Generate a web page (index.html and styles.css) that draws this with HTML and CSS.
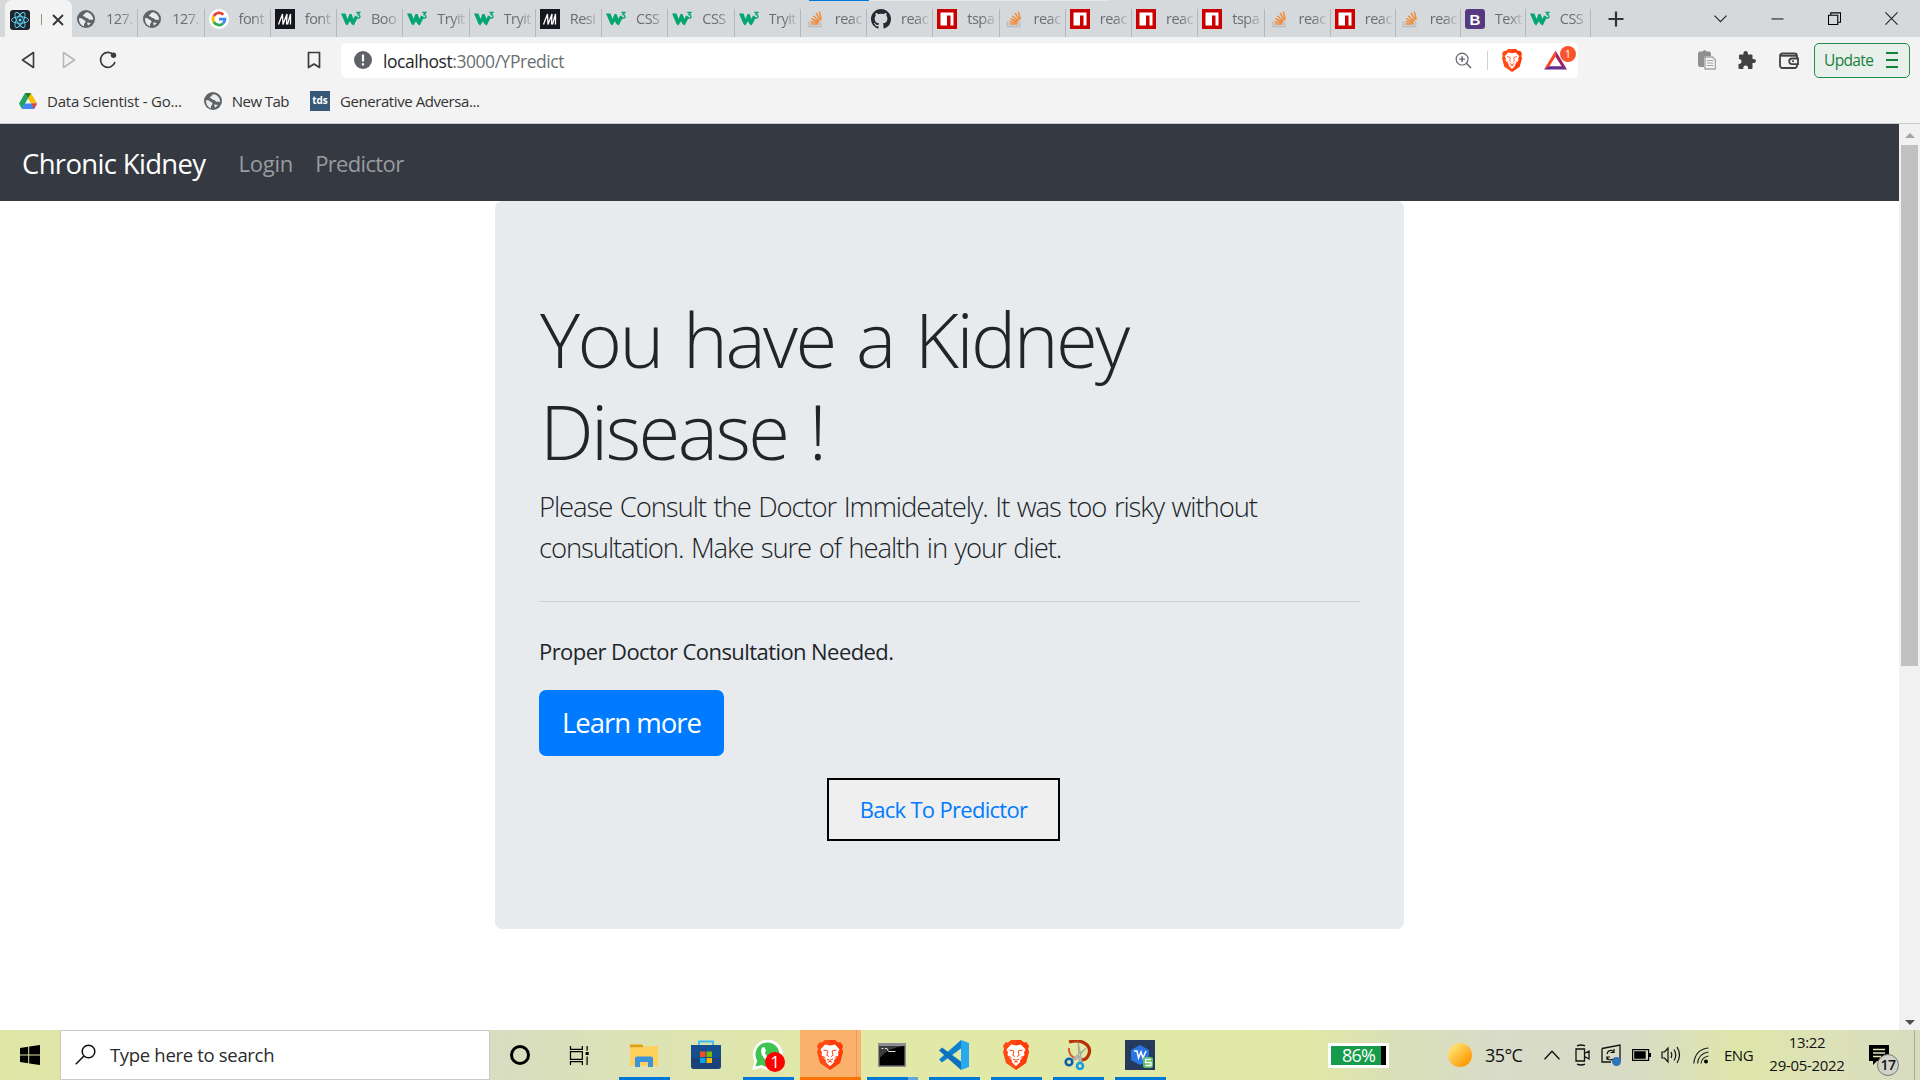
FILE: index.html
```html
<!DOCTYPE html>
<html lang="en">
<head>
<meta charset="utf-8">
<title>Chronic Kidney</title>
<link rel="stylesheet" href="styles.css">
</head>
<body>
<svg class="defs" width="0" height="0">
  <symbol id="globe" viewBox="0 0 20 20"><circle cx="10" cy="10" r="9" fill="#5f6368"/><path d="M3 9c2 .3 3 .2 4 1.300s2.500 1 2.500 2.400-1.500 1.300-1.500 3v1.500C5 16.500 2.800 13.500 3 9zM10.500 3.200c-1.800.600-1.600 2-3 2.600-1 .500-.4 1.500.6 1.700 1.500.2 1 1.500 2.700 1.500 1.500 0 1.600 1.500 3 1.800 1.200.2 2.200-.3 3.300.2.300-3.600-2.600-7.500-6.600-7.800zM11 13.500l4 .5-3 2.800z" fill="#e8eaec"/></symbol>
  <symbol id="google" viewBox="0 0 20 20"><circle cx="10" cy="10" r="10" fill="#fff"/><g fill="none" stroke-width="2.800"><path d="M14.300 5.700A6 6 0 0 0 4.800 7" stroke="#ea4335"/><path d="M4.800 7a6 6 0 0 0 0 6" stroke="#fbbc05"/><path d="M4.800 13a6 6 0 0 0 9.200 1.500" stroke="#34a853"/><path d="M14 14.500A6 6 0 0 0 16 10.100H10" stroke="#4285f4"/></g></symbol>
  <symbol id="mui" viewBox="0 0 20 20"><path d="M0 0h20v20H0z" fill="#16161e"/><path d="M3.500 15.500L7.500 5l.5 10.500L12 5l-.5 10.500M12.500 15.500L15.500 5v10.500" fill="none" stroke="#fff" stroke-width="1.300"/></symbol>
  <symbol id="w3" viewBox="0 0 20 20"><path d="M0 4.500h4.500l2 5.500 2-5h2l2 5 1.500-3.500 3 1.500-4.300 8.500L10.500 15l-1.500-2.800-2.800 4.300L4.500 15z" fill="#04a56f"/><path d="M15.300 3.500H18.700L17 5.600q2 .1 2 1.800t-2 1.700q-1.200 0-1.900-.8" fill="none" stroke="#04a56f" stroke-width="1.300"/></symbol>
  <symbol id="stack" viewBox="0 0 20 20"><path d="M3.500 12.500v5h12v-5" fill="none" stroke="#b9bdc0" stroke-width="1.500"/><path d="M5.500 15h8M5.500 12.600l8 1.200M6.400 9.700l7.400 3M8.200 6.800l6.300 5.200M11 4l4.500 7M14.300 2.600l2 7.800" stroke="#f48024" stroke-width="1.500" opacity=".85"/></symbol>
  <symbol id="github" viewBox="0 0 16 16"><path fill="#24292f" d="M8 0C3.580 0 0 3.580 0 8c0 3.540 2.290 6.530 5.470 7.590.4.070.55-.17.55-.38 0-.19-.01-.82-.01-1.490-2.010.37-2.530-.49-2.690-.94-.09-.23-.48-.94-.82-1.130-.28-.15-.68-.52-.01-.53.63-.01 1.080.58 1.230.82.72 1.210 1.870.87 2.330.66.07-.52.28-.87.51-1.070-1.780-.2-3.640-.89-3.640-3.950 0-.87.31-1.590.82-2.150-.08-.2-.36-1.020.08-2.120 0 0 .67-.21 2.200.82.64-.18 1.320-.27 2-.27s1.360.09 2 .27c1.530-1.040 2.200-.82 2.200-.82.44 1.100.16 1.920.08 2.120.51.56.82 1.270.82 2.150 0 3.070-1.870 3.750-3.650 3.950.29.25.54.73.54 1.480 0 1.070-.01 1.930-.01 2.200 0 .21.15.46.55.38A8.010 8.010 0 0 0 16 8c0-4.420-3.580-8-8-8z"/></symbol>
  <symbol id="npm" viewBox="0 0 20 20"><path d="M0 0h20v20H0z" fill="#cb0000"/><path d="M3.500 3.500h13v13h-3V6.500h-3.500v10H3.500z" fill="#fff"/></symbol>
  <symbol id="boot" viewBox="0 0 20 20"><rect width="20" height="20" rx="3" fill="#553a82"/><text x="10" y="15.500" text-anchor="middle" class="boot-b">B</text></symbol>
  <symbol id="lion" viewBox="0 0 26 30"><path d="M5 2.500L8 0h10l3 2.500 2.500-.2L26 6l-1 3 1 3-3 11-10 7-10-7L0 12l1-3L0 6l2.500-3.700z" fill="#ff4a13"/><path d="M13 0h5l3 2.500 2.500-.2L26 6l-1 3 1 3-3 11-10 7z" fill="#ff2a00" opacity=".45"/><path d="M8 4.500l5 1 5-1 4.500 5-1.500 3 .5 2.500-4.500 5.500.3 1.500-4.300 4.200-4.300-4.200.3-1.500L4.500 15l.5-2.500-1.500-3z" fill="#fff"/><path d="M6.500 10l4 .8.300 1.200-1 3.200 2 1.300M19.500 10l-4 .8-.3 1.200 1 3.200-2 1.300M10 19l3 1.300 3-1.300M6 16l2.500 2M20 16l-2.500 2M11 22.300l2-1 2 1" fill="none" stroke="#ff4013" stroke-width="1"/></symbol>
</svg>

<header class="browser">
  <div class="tabstrip">
    <div class="tab active"><svg class="fav" viewBox="0 0 20 20"><rect width="20" height="20" rx="3" fill="#20232a"/><g fill="none" stroke="#61dafb" stroke-width=".9"><ellipse cx="10" cy="10" rx="8.500" ry="3.300"/><ellipse cx="10" cy="10" rx="8.500" ry="3.300" transform="rotate(60 10 10)"/><ellipse cx="10" cy="10" rx="8.500" ry="3.300" transform="rotate(120 10 10)"/></g><circle cx="10" cy="10" r="1.500" fill="#61dafb"/></svg><span class="sliver"></span><svg class="close" viewBox="0 0 12 12"><path d="M1 1l10 10M11 1L1 11" stroke="#333" stroke-width="1.800"/></svg></div>
    <div class="tab"><svg class="fav"><use href="#globe"/></svg><span>127.</span></div>
    <div class="tab"><svg class="fav"><use href="#globe"/></svg><span>127.</span></div>
    <div class="tab"><svg class="fav"><use href="#google"/></svg><span>font</span></div>
    <div class="tab"><svg class="fav"><use href="#mui"/></svg><span>font</span></div>
    <div class="tab"><svg class="fav"><use href="#w3"/></svg><span>Boo</span></div>
    <div class="tab"><svg class="fav"><use href="#w3"/></svg><span>Tryit</span></div>
    <div class="tab"><svg class="fav"><use href="#w3"/></svg><span>Tryit</span></div>
    <div class="tab"><svg class="fav"><use href="#mui"/></svg><span>Resi</span></div>
    <div class="tab"><svg class="fav"><use href="#w3"/></svg><span>CSS</span></div>
    <div class="tab"><svg class="fav"><use href="#w3"/></svg><span>CSS</span></div>
    <div class="tab"><svg class="fav"><use href="#w3"/></svg><span>Tryit</span></div>
    <div class="tab"><svg class="fav"><use href="#stack"/></svg><span>reac</span></div>
    <div class="tab"><svg class="fav"><use href="#github"/></svg><span>reac</span></div>
    <div class="tab"><svg class="fav"><use href="#npm"/></svg><span>tspa</span></div>
    <div class="tab"><svg class="fav"><use href="#stack"/></svg><span>reac</span></div>
    <div class="tab"><svg class="fav"><use href="#npm"/></svg><span>reac</span></div>
    <div class="tab"><svg class="fav"><use href="#npm"/></svg><span>reac</span></div>
    <div class="tab"><svg class="fav"><use href="#npm"/></svg><span>tspa</span></div>
    <div class="tab"><svg class="fav"><use href="#stack"/></svg><span>reac</span></div>
    <div class="tab narrow"><svg class="fav"><use href="#npm"/></svg><span>reac</span></div>
    <div class="tab narrow"><svg class="fav"><use href="#stack"/></svg><span>reac</span></div>
    <div class="tab narrow"><svg class="fav"><use href="#boot"/></svg><span>Text</span></div>
    <div class="tab narrow"><svg class="fav"><use href="#w3"/></svg><span>CSS</span></div>
    <svg class="newtab" viewBox="0 0 16 16"><path d="M8 .5v15M.5 8h15" stroke="#333" stroke-width="2.200"/></svg>
    <div class="winctl">
      <svg viewBox="0 0 14 14"><path d="M.5 4l6.500 6.500L13.500 4" fill="none" stroke="#222" stroke-width="1.200"/></svg>
      <svg viewBox="0 0 14 14"><path d="M.5 7.500h13" stroke="#000"/></svg>
      <svg viewBox="0 0 14 14"><path d="M.5 3.500h10v10H.5zM3 3.500V1h10.500v10H10.500" fill="none" stroke="#000" stroke-width="1.200"/></svg>
      <svg viewBox="0 0 14 14"><path d="M.5.5l13 13M13.500.5l-13 13" stroke="#222" stroke-width="1.200"/></svg>
    </div>
    <div class="progress"></div>
  </div>

  <div class="toolbar">
    <svg class="back" viewBox="0 0 14 18"><path d="M12.500 1.500v15L1.500 9z" fill="none" stroke="#3b3b3b" stroke-width="1.600" stroke-linejoin="round"/></svg>
    <svg class="fwd" viewBox="0 0 14 18"><path d="M1.500 1.500v15L12.500 9z" fill="none" stroke="#b8b8b8" stroke-width="1.600" stroke-linejoin="round"/></svg>
    <svg class="reload" viewBox="0 0 18 18"><path d="M14.500 4A7.400 7.400 0 1 0 16 11" fill="none" stroke="#3b3b3b" stroke-width="1.700"/><circle cx="14.500" cy="4.200" r="2.700" fill="#3b3b3b"/></svg>
    <svg class="mark" viewBox="0 0 14 18"><path d="M1.500 1.500h11v15L7 13l-5.500 3.500z" fill="none" stroke="#3b3b3b" stroke-width="1.700" stroke-linejoin="round"/></svg>
    <div class="omnibox">
      <svg class="info" viewBox="0 0 18 18"><circle cx="9" cy="9" r="9" fill="#5f6368"/><path d="M9 3.500v7M9 12.200v2.300" stroke="#fff" stroke-width="2.200"/></svg>
      <span class="url"><span class="host">localhost</span>:3000/YPredict</span>
      <svg class="zoomi" viewBox="0 0 18 18"><circle cx="7.500" cy="7.500" r="6.300" fill="none" stroke="#5f6368" stroke-width="1.200"/><path d="M12 12l5 5M4.500 7.500h6M7.500 4.500v6" stroke="#5f6368" stroke-width="1.500"/></svg>
      <span class="sep"></span>
      <svg class="shield"><use href="#lion"/></svg>
      <div class="bat">
        <svg viewBox="0 0 24 20"><path d="M12 0L0 20l5-2.500 7-11z" fill="#ff4724"/><path d="M12 0l12 20-5-2.500-7-11z" fill="#9e1f63"/><path d="M0 20h24l-5-3.500H5z" fill="#662d91"/></svg>
        <span class="badge">1</span>
      </div>
    </div>
    <svg class="clip" viewBox="0 0 18 20"><path d="M0 3.500l1-2h3L6.500 0l2.500 1.500h3l1 2V6H8L6 8v9H1.500L0 15.500z" fill="#8f8f8f"/><path d="M7 7h7.500l3 3v9H7z" fill="#f3f3f3" stroke="#a5a5a5" stroke-width="1.400"/><path d="M9 10.500h6.500M9 13h6.500M9 15.500h6.500" stroke="#a5a5a5"/></svg>
    <svg class="puzzle" viewBox="0 0 18 18"><path d="M1 4.500q0-1 1-1h3.500Q5 0 7.500 0T10 3.500h3.500q1 0 1 1V8q3.500-.5 3.500 2t-3.500 2v5q0 1-1 1H10q.5-3.500-2.300-3.500T5.300 18H1.500Q.5 18 .5 17v-4q3 0 3-2.500T1 8z" fill="#424242"/></svg>
    <svg class="wallet" viewBox="0 0 20 17"><rect x="1" y="1.500" width="17" height="14.500" rx="2.500" fill="none" stroke="#424242" stroke-width="1.800"/><path d="M2 3.800h16" stroke="#424242" stroke-width="1.800"/><path d="M19 6.500h-6a2.700 2.700 0 0 0 0 5.600h6z" fill="#f3f3f3" stroke="#424242" stroke-width="1.800"/><path d="M13 9.300h2" stroke="#424242" stroke-width="1.500"/></svg>
    <div class="update"><span>Update</span><i></i></div>
  </div>

  <div class="bookmarks">
    <svg class="drive" viewBox="0 0 18 16"><path d="M6 0h6l6 10.500h-6z" fill="#fbbc04"/><path d="M6 0l3 5.300L3 16 0 10.500z" fill="#1ea362"/><path d="M6 0h6L9 5.300z" fill="#188038"/><path d="M5.500 10.500H18L15 16H3z" fill="#4285f4"/><path d="M12.500 10.500H18L15 16z" fill="#ea4335"/></svg>
    <span class="b1">Data Scientist - Go...</span>
    <svg class="gl"><use href="#globe"/></svg>
    <span class="b2">New Tab</span>
    <span class="tds">tds</span>
    <span class="b3">Generative Adversa...</span>
  </div>
</header>

<div class="viewport">
  <main class="page">
    <nav class="navbar">
      <a class="brand">Chronic Kidney</a>
      <a class="link l1">Login</a>
      <a class="link l2">Predictor</a>
    </nav>
    <section class="jumbotron">
      <h1>You have a Kidney<br>Disease !</h1>
      <p class="lead">Please Consult the Doctor Immideately. It was too risky without<br>consultation. Make sure of health in your diet.</p>
      <hr>
      <p class="note">Proper Doctor Consultation Needed.</p>
      <a class="btn">Learn more</a>
      <div class="actions"><button class="return">Back To Predictor</button></div>
    </section>
  </main>
  <div class="scrollbar"><i class="up"></i><div class="thumb"></div><i class="down"></i></div>
</div>

<footer class="taskbar">
  <div class="start"><svg viewBox="0 0 20 20"><path d="M0 2.900l8.200-1.200V9.500H0zM9.200 1.500L20 0v9.500H9.200zM0 10.500h8.200v7.800L0 17.100zM9.200 10.500H20V20L9.200 18.500z"/></svg></div>
  <div class="search"><svg viewBox="0 0 21 21"><circle cx="13.500" cy="7.500" r="6.300" fill="none" stroke="#111" stroke-width="1.500"/><path d="M9 12L.7 20.300" stroke="#111" stroke-width="1.500"/></svg><span>Type here to search</span></div>
  <div class="cortana"></div>
  <svg class="taskview" viewBox="0 0 21 20"><path d="M1 0v3.500h12.500V0M1 20v-3.500h12.500V20M1 6h12.500v8H1zM18.500 0v5M18.500 11v9" fill="none" stroke="#000" stroke-width="1.300"/><path d="M17 6.300h3.200v3.200H17z"/></svg>
  <div class="apps">
    <div class="app on"><svg width="28" height="24" viewBox="0 0 28 24"><path d="M0 1.500h12l2 3H0z" fill="#e3a008"/><path d="M0 4.500h14l2-1.500h12v20H0z" fill="#ffd25e"/><path d="M5 24V15.500q0-2 2-2h14q2 0 2 2V24h-5v-5h-8v5z" fill="#3b93dc"/></svg></div>
    <div class="app"><svg width="30" height="30" viewBox="0 0 30 30"><path d="M8 6V1.500h14V6" fill="none" stroke="#38bdf8" stroke-width="1.800"/><path d="M0 5h30v21q0 3-3 3H3q-3 0-3-3z" fill="#154f8e"/><path d="M0 18h30v8q0 3-3 3H3q-3 0-3-3z" fill="#213b68" opacity=".55"/><path d="M9 11.500h5.500V17H9z" fill="#f25022"/><path d="M15.500 11.500H21V17h-5.500z" fill="#7fba00"/><path d="M9 18h5.500v5H9z" fill="#00a4ef"/><path d="M15.500 18H21v5h-5.500z" fill="#ffb900"/></svg></div>
    <div class="app on"><svg width="32" height="32" viewBox="0 0 32 32"><path d="M0 31l2.500-8.500A15 15 0 1 1 9 29z" fill="#fff"/><path d="M3.500 27.500l1.700-5.800a12 12 0 1 1 4.500 4.300z" fill="#3fc351"/><path d="M10 9q2-2 3 .5l1 2.500-1.200 2q1.800 3.500 5.200 5l2-1.500 3 1.800q0 3-4 3Q10.500 21 9 13q0-2.500 1-4z" fill="#fff"/></svg><span class="count">1</span></div>
    <div class="app current"><svg width="26" height="30"><use href="#lion"/></svg></div>
    <div class="app on multi"><svg width="28" height="24" viewBox="0 0 28 24"><path d="M0 0h28v24H0z" fill="#8b8f92"/><path d="M1.500 3h25v19.500h-25z"/><path d="M1.500 3h25q-15 1-25 12z" fill="#3b3b3b"/><path d="M3.500 5.500h2M7 5.500h2l1.500 3h7" fill="none" stroke="#ddd"/></svg></div>
    <div class="app on"><svg width="30" height="30" viewBox="0 0 30 30"><path d="M22 0L0 19.500 3 22.500 22 8.500z" fill="#0f80cc"/><path d="M22 30L0 10.500l3-3L22 21.500z" fill="#0c70bd"/><path d="M22 0l8 3v24l-8 3z" fill="#28a8ef"/></svg></div>
    <div class="app on"><svg width="26" height="30"><use href="#lion"/></svg></div>
    <div class="app on"><svg width="28" height="30" viewBox="0 0 28 30"><path d="M5 2Q16-1 22 4t2 12q-2 4-7 4" fill="none" stroke="#b83205" stroke-width="3.200"/><path d="M5 8q-1 7 7 11" fill="none" stroke="#d25a2b" stroke-width="2"/><path d="M14 1l4 20-3 2zM22 8L7 20l6-1z" fill="#b9bcc0" stroke="#888" stroke-width=".5"/><circle cx="5" cy="22" r="3.300" fill="none" stroke="#0d5fae" stroke-width="2.600"/><circle cx="16" cy="26" r="3" fill="none" stroke="#1c9be0" stroke-width="2.600"/></svg></div>
    <div class="app on"><svg width="30" height="30" viewBox="0 0 30 30"><path d="M0 0h30v30H0z" fill="#253a5c"/><path d="M15 5l9 5v10l-9 5-9-5V10z" fill="#2a75e6"/><path d="M9 11h3l1.500 7 2.500-6 2 6 3-7" fill="none" stroke="#fff" stroke-width="1.500"/><rect x="18" y="17" width="10" height="11" rx="2" fill="#5fbf66"/><path d="M26 19.500h-5.500v3H26v3h-5.500" fill="none" stroke="#fff" stroke-width="1.300"/></svg></div>
  </div>
  <div class="battery"><b>86%</b></div>
  <div class="sun"></div>
  <span class="temp">35°C</span>
  <div class="tray">
    <svg class="t1" viewBox="0 0 16 10"><path d="M.5 9.200L8 1.200l7.500 8" fill="none" stroke="#111" stroke-width="1.400"/></svg>
    <svg class="t2" viewBox="0 0 15 22"><path d="M1 5h8.500v12H1zM9.500 9.500l4.500-2.500v8l-4.500-2.500M2 1.800Q6 .2 10 1.800M2 20.200q4 1.600 8 0" fill="none" stroke="#111" stroke-width="1.300"/></svg>
    <svg class="t3" viewBox="0 0 20 22"><path d="M1 4.500L19 1v16M1 4.500V18h9" fill="none" stroke="#111" stroke-width="1.300"/><path d="M6 10q1-4 5-3.500l2 1.500M13 5v3.500H9.500M5.500 12.500l2 3q3 1 5-.5M6 16v-3h3" fill="none" stroke="#111" stroke-width="1.200"/><circle cx="15.500" cy="17.500" r="4.500" fill="#2f73bd"/></svg>
    <svg class="t4" viewBox="0 0 19 12"><path d="M.6.600h16v10.800H.6z" fill="none" stroke="#000" stroke-width="1.200"/><path d="M2.200 2.200h11.500v7.600H2.200zM17 4h2v4h-2z"/></svg>
    <svg class="t5" viewBox="0 0 20 18"><path d="M1 6h2.500L7 2v14l-3.500-4H1zM10 6q1.500 3 0 6M13 3.500q3.500 5.500 0 11M16 1q5 8 0 16" fill="none" stroke="#111" stroke-width="1.200"/></svg>
    <svg class="t6" viewBox="0 0 16 17"><path d="M.8 16.500Q2 2.500 15.500 1M4.500 16.500Q5.500 6.500 15.500 5M8 16.500Q9 10 15.500 9" fill="none" stroke="#222" stroke-width="1.200"/><circle cx="13" cy="14.500" r="2"/></svg>
    <span class="lang">ENG</span>
  </div>
  <div class="clock"><span>13:22</span><span>29-05-2022</span></div>
  <div class="notif"><svg viewBox="0 0 20 20"><path d="M0 0h20v16H8l-4 4v-4H0z"/><path d="M4 4.500h12M4 8h12M4 11.500h8" stroke="#e3e8bb" stroke-width="1.300"/></svg><span>17</span></div>
  <div class="desk"></div>
</footer>
</body>
</html>
```
FILE: styles.css
```css
* { box-sizing: border-box; }
body { margin: 0; width: 1920px; height: 1080px; overflow: hidden; display: flex; flex-direction: column; font-family: "Open Sans", "Noto Sans", sans-serif; background: #fff; color: #212529; white-space: nowrap; }
.defs { position: absolute; }
svg { display: block; flex: none; }

/* browser chrome */
.browser { flex: none; height: 124px; background: #f3f3f3; border-bottom: 1px solid #c9cccf; }
.tabstrip { position: relative; display: flex; align-items: flex-start; height: 37px; padding-left: 5px; background: #d5d9dc; }
.tab { flex: none; display: flex; align-items: center; width: 66.250px; height: 28px; margin-top: 9px; padding: 0 2px 8px 4px; border-right: 1px solid #b4b8bb; font-size: 14.500px; letter-spacing: -.5px; color: #6a6e72; }
.tab.narrow { width: 65px; }
.tab .fav { width: 20px; height: 20px; }
.tab span { flex: 1; margin-left: 10px; line-height: 20px; -webkit-mask-image: linear-gradient(90deg, #000 50%, transparent 105%); mask-image: linear-gradient(90deg, #000 50%, transparent 105%); }
.tab.active { width: 67px; height: 37px; margin-top: 0; padding: 2px 9px 0 5px; background: #f3f3f3; border: 0; border-radius: 7px 7px 0 0; }
.tab .sliver { flex: none; width: 1px; height: 11px; margin-left: 11px; background: #a58f7c; }
.tab .close { width: 12px; height: 12px; margin-left: 10px; }
.boot-b { font: bold 15px "Liberation Sans", sans-serif; fill: #fff; letter-spacing: 0; }
.newtab { width: 16px; height: 16px; margin: 11px 0 0 17px; }
.winctl { display: flex; gap: 44px; margin: 12px 22px 0 auto; }
.winctl svg { width: 13px; height: 13px; }
.progress { position: absolute; left: 809px; top: 0; width: 301px; height: 1px; background: linear-gradient(90deg, #0078d7 60px, #e6e6e6 60px); }

.toolbar { display: flex; align-items: center; height: 46px; padding: 0 10px 0 21px; }
.back { width: 14px; height: 18px; }
.fwd { width: 14px; height: 18px; margin-left: 27px; }
.reload { width: 18px; height: 18px; margin-left: 23px; }
.mark { width: 14px; height: 18px; margin-left: 190px; }
.omnibox { display: flex; align-items: center; width: 1237px; height: 35px; margin-left: 20px; padding: 0 8px 0 13px; border-radius: 5px; background: #fff; }
.info { width: 18px; height: 18px; }
.url { margin-left: 11px; padding-top: 1px; font-size: 17.500px; letter-spacing: -.45px; color: #6b6f73; }
.host { color: #26282a; }
.zoomi { width: 17px; height: 17px; margin-left: auto; }
.sep { width: 1px; height: 19px; margin: 0 14px 0 15px; background: #cfd2d5; }
.shield { width: 20px; height: 23px; }
.bat { position: relative; width: 23px; margin: 0 3px 0 22px; }
.bat svg { width: 23px; height: 20px; }
.badge { position: absolute; left: 16px; top: -4px; width: 16px; height: 16px; border-radius: 8px; background: #fb542b; color: #fff; font-size: 11px; line-height: 16px; text-align: center; }
.clip { width: 18px; height: 20px; margin-left: 120px; }
.puzzle { width: 18px; height: 18px; margin-left: 22px; }
.wallet { width: 20px; height: 17px; margin-left: 23px; }
.update { display: flex; align-items: center; justify-content: space-between; width: 96px; height: 35px; margin-left: 15px; padding: 0 11px 0 9px; border: 1px solid #1e8e4a; border-radius: 5px; background: #e9f0eb; color: #15803d; font-size: 15.500px; letter-spacing: -.65px; }
.update i { width: 12px; height: 16px; background: linear-gradient(#15803d 2px, transparent 2px 7px, #15803d 7px 9px, transparent 9px 14px, #15803d 14px); }

.bookmarks { display: flex; align-items: center; height: 36px; padding-left: 19px; font-size: 15px; color: #333; }
.bookmarks span { margin-top: -1px; }
.b1 { letter-spacing: -.22px; }
.b2 { letter-spacing: -.55px; }
.b3 { letter-spacing: -.42px; }
.drive { width: 18px; height: 16px; margin-right: 10px; }
.gl { width: 20px; height: 20px; margin: 0 9px 0 21px; }
.tds { width: 20px; height: 20px; margin: 0 10px 0 21px; background: #355876; color: #fff; font-size: 10px; font-weight: 700; line-height: 19px; text-align: center; }

/* web page */
.viewport { flex: none; display: flex; height: 906px; }
.page { width: 1899px; }
.navbar { display: flex; align-items: center; height: 77px; padding: 2px 22px 0; background: #353941; }
.brand { font-size: 27.500px; letter-spacing: -.67px; color: #fff; line-height: 41px; }
.link { font-size: 22px; letter-spacing: -.65px; color: #999c9f; line-height: 33px; }
.l1 { margin-left: 33px; letter-spacing: -.2px; }
.l2 { margin-left: 22px; }
.jumbotron { width: 909px; height: 728px; margin-left: 495px; padding: 88px 44px; border-radius: 7px; background: #e7ebee; }
h1 { margin: 0 0 8px; padding: 4px 0 0 1px; font-size: 76px; font-weight: 300; line-height: 92.400px; letter-spacing: -2.550px; word-spacing: 4px; }
.lead { margin: 0 0 32.500px; font-size: 27.500px; font-weight: 300; line-height: 41.250px; letter-spacing: -1.110px; word-spacing: 1.500px; }
hr { height: 1px; margin: 0 0 33px; border: 0; background: #cfd3d6; }
.note { margin: 0 0 22px; font-size: 22px; line-height: 33px; letter-spacing: -.57px; }
.btn { display: flex; justify-content: center; align-items: center; width: 185px; height: 66px; border-radius: 7px; background: #007bff; color: #fff; font-size: 27.500px; letter-spacing: -1px; }
.actions { display: flex; margin: 22px 0 0 288px; }
.return { width: 233px; height: 63px; padding: 0; border: 2px solid #000; background: #efefef; color: #007bff; font: 22px "Open Sans", "Noto Sans", sans-serif; letter-spacing: -.7px; }
.scrollbar { display: flex; flex-direction: column; align-items: center; width: 21px; background: #f1f1f1; }
.up, .down { width: 0; height: 0; border: 5px solid transparent; }
.up { margin: 4px 0 7px; border-bottom-color: #a3a3a3; }
.down { margin: auto 0 0; border-top-color: #505050; }
.thumb { width: 17px; height: 521px; background: #c1c1c1; }

/* taskbar */
.taskbar { flex: none; display: flex; align-items: center; height: 50px; background: linear-gradient(90deg, #dfe6a6 0, #dbe0b4 400px, #d9ddc1 500px, #dde4b0 680px, #e2e9a6 860px, #e1e9a6 1300px, #d9dfb8 1400px, #d8dcc8 1500px, #d8dcc4 1640px, #dfe6aa 1740px, #dbe0ba 1850px, #d8dcc0 1920px); color: #111; }
.start { width: 60px; padding-left: 20px; }
.start svg { width: 20px; height: 20px; }
.search { display: flex; align-items: center; width: 430px; height: 50px; padding: 0 0 2px 14px; border: 1px solid #c9c9c9; background: #fff; font-size: 18.500px; letter-spacing: -.32px; color: #2b2b2b; }
.search svg { width: 21px; height: 21px; margin-right: 14px; }
.cortana { width: 20px; height: 20px; margin-left: 20px; border: 3px solid #000; border-radius: 50%; }
.taskview { width: 21px; height: 19px; margin: 0 24px 0 39px; }
.apps { display: flex; gap: 1px; height: 50px; }
.app { position: relative; display: flex; align-items: center; justify-content: center; width: 61px; height: 50px; padding-right: 2px; }
.app.on { background: linear-gradient(#0078d7, #0078d7) 5px 47px / 51px 3px no-repeat; }
.app.multi { background: linear-gradient(90deg, #0078d7 41px, #64a7e0 41px) 5px 47px / 51px 3px no-repeat; }
.app.current { background: linear-gradient(90deg, #fab16c 56px, #e89c4f 56px 57px, #fab16c 57px); border-bottom: 3px solid #ff7200; padding-top: 3px; }
.count { position: absolute; left: 27px; top: 22px; width: 20px; height: 20px; border-radius: 10px; background: #f00; color: #fff; font-size: 17px; line-height: 20px; text-align: center; }
.battery { width: 61px; height: 25px; margin-left: 157px; padding: 2px 0; border: 1px solid #fff; border-width: 1px 3px 1px 3px; background: linear-gradient(90deg, #169b4a 50px, #000 50px 55px, #fff 55px) content-box, #fff; color: #fff; }
.battery b { display: block; width: 55px; font-size: 18px; line-height: 19px; font-weight: 400; letter-spacing: -.8px; text-align: center; }
.sun { width: 24px; height: 24px; margin-left: 59px; border-radius: 50%; background: linear-gradient(135deg, #ffe272 15%, #ff9800 85%); }
.temp { width: 38px; margin-left: 13px; font-size: 18px; letter-spacing: -.6px; }
.tray { display: flex; align-items: center; margin-left: 21px; }
.t1 { width: 16px; height: 10px; }
.t2 { width: 15px; height: 22px; margin-left: 15px; }
.t3 { width: 20px; height: 22px; margin-left: 11px; }
.t4 { width: 19px; height: 12px; margin-left: 11px; }
.t5 { width: 20px; height: 18px; margin-left: 10px; }
.t6 { width: 16px; height: 17px; margin-left: 12px; }
.lang { width: 29px; margin-left: 15px; font-size: 15px; letter-spacing: -.5px; }
.clock { display: flex; flex-direction: column; align-items: center; width: 76px; margin: -2px 0 0 16px; font-size: 15px; line-height: 23px; letter-spacing: -.3px; }
.notif { position: relative; width: 20px; margin-left: 24px; }
.notif svg { width: 20px; height: 20px; }
.notif span { position: absolute; left: 8px; top: 9px; width: 22px; height: 22px; border: 1px solid #777; border-radius: 50%; background: #cfd2c8; font-size: 14px; font-weight: 600; line-height: 20px; letter-spacing: -.5px; text-align: center; }
.desk { width: 6px; height: 50px; margin-left: auto; border-left: 1px solid #a9ad90; }
```
